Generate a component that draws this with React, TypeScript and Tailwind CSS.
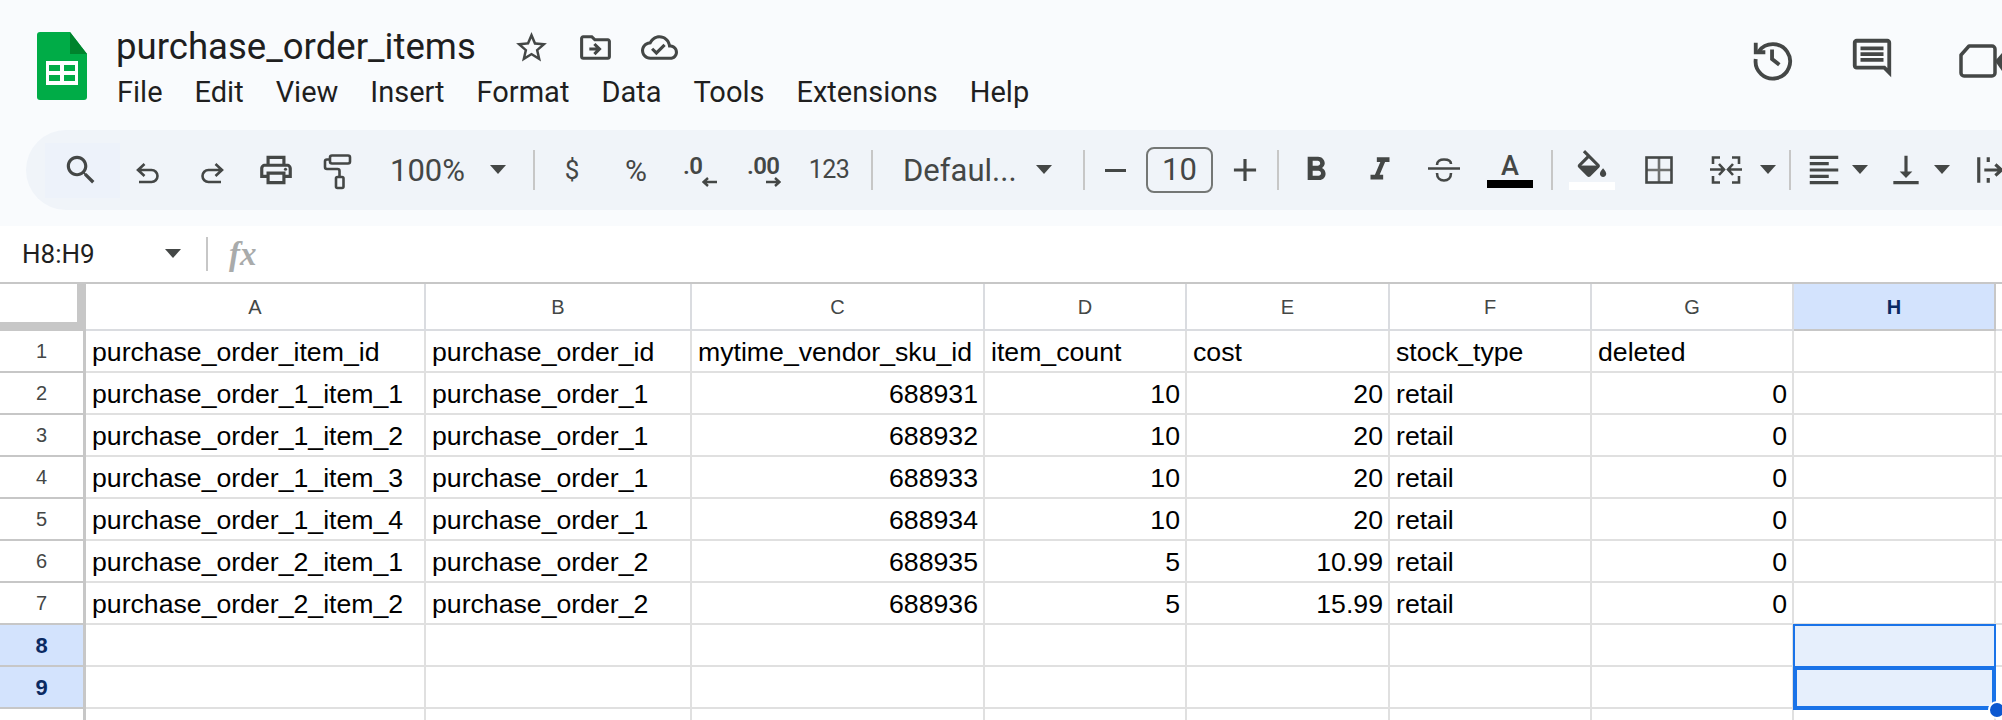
import type { ReactNode } from "react";

const GREY = "#444746";

function Icon({ size = 32, children, className = "" }: { size?: number; children: ReactNode; className?: string }) {
  return (
    <svg width={size} height={size} viewBox="0 0 24 24" fill={GREY} className={className}>
      {children}
    </svg>
  );
}

function Caret({ className = "" }: { className?: string }) {
  return (
    <svg width="18" height="10" viewBox="0 0 18 10" fill={GREY} className={className}>
      <path d="M1 0h16l-8 9z" />
    </svg>
  );
}

function Sep() {
  return <div className="w-[2px] h-10 bg-[#c7c7c7] shrink-0" />;
}

function Btn({ className, children }: { className: string; children: ReactNode }) {
  return <div className={`flex items-center justify-center shrink-0 h-full ${className}`}>{children}</div>;
}

const stroke = { fill: "none", stroke: GREY, strokeWidth: 2 };
const thick = { fill: "none", stroke: GREY, strokeWidth: 2.6 };

const columns = ["A", "B", "C", "D", "E", "F", "G", "H"];

const rows: (string | number)[][] = [
  ["purchase_order_item_id", "purchase_order_id", "mytime_vendor_sku_id", "item_count", "cost", "stock_type", "deleted", ""],
  ["purchase_order_1_item_1", "purchase_order_1", 688931, 10, 20, "retail", 0, ""],
  ["purchase_order_1_item_2", "purchase_order_1", 688932, 10, 20, "retail", 0, ""],
  ["purchase_order_1_item_3", "purchase_order_1", 688933, 10, 20, "retail", 0, ""],
  ["purchase_order_1_item_4", "purchase_order_1", 688934, 10, 20, "retail", 0, ""],
  ["purchase_order_2_item_1", "purchase_order_2", 688935, 5, 10.99, "retail", 0, ""],
  ["purchase_order_2_item_2", "purchase_order_2", 688936, 5, 15.99, "retail", 0, ""],
  ["", "", "", "", "", "", "", ""],
  ["", "", "", "", "", "", "", ""],
  ["", "", "", "", "", "", "", ""],
];

function Logo() {
  return (
    <svg width="50" height="68" viewBox="0 0 50 68" className="shrink-0">
      <path d="M3 0h30l17 22v43a3 3 0 0 1-3 3H3a3 3 0 0 1-3-3V3a3 3 0 0 1 3-3z" fill="#00ac47" />
      <path d="M33 0l17 22H33z" fill="#00832d" />
      <path d="M9 29h32v24H9z" fill="#fff" />
      <path d="M12 33h11v6H12zM27 33h11v6H27zM12 43h11v6H12zM27 43h11v6H27z" fill="#00ac47" />
    </svg>
  );
}

function TitleBar() {
  return (
    <div className="flex h-[130px] pl-[37px] overflow-hidden">
      <div className="mt-8"><Logo /></div>
      <div className="ml-[29px] pt-[24px]">
        <div className="flex items-center h-[46px]">
          <span className="text-[36.6px] leading-none text-[#1f1f1f] font-['Roboto',sans-serif]">purchase_order_items</span>
          <div className="flex items-center ml-[37px] gap-[27px]">
            <Icon size={37}>
              <path d="M22 9.24l-7.19-.62L12 2 9.19 8.63 2 9.24l5.46 4.73L5.82 21 12 17.27 18.18 21l-1.63-7.03L22 9.24zM12 15.4l-3.76 2.27 1-4.28-3.32-2.88 4.38-.38L12 6.1l1.71 4.04 4.38.38-3.32 2.88 1 4.28L12 15.4z" />
            </Icon>
            <Icon size={37}>
              <path d="M20 6h-8l-2-2H4c-1.1 0-2 .9-2 2v12c0 1.1.9 2 2 2h16c1.1 0 2-.9 2-2V8c0-1.1-.9-2-2-2zm0 12H4V6h5.17l2 2H20v10z" />
              <path d="M12.16 12H8v2h4.16l-1.59 1.59L11.99 17 16 13l-4.01-4-1.42 1.41z" />
            </Icon>
            <Icon size={37}>
              <path d="M19.35 10.04C18.67 6.59 15.64 4 12 4 9.11 4 6.6 5.64 5.35 8.04 2.34 8.36 0 10.91 0 14c0 3.31 2.69 6 6 6h13c2.76 0 5-2.24 5-5 0-2.64-2.05-4.78-4.65-4.96zM19 18H6c-2.21 0-4-1.79-4-4 0-2.05 1.53-3.76 3.56-3.97l1.07-.11.5-.95C8.08 7.14 9.94 6 12 6c2.62 0 4.88 1.86 5.39 4.43l.3 1.5 1.53.11c1.56.1 2.78 1.41 2.78 2.96 0 1.65-1.35 3-3 3zm-9-3.82l-2.09-2.09L6.5 13.5 10 17l6.01-6.01-1.41-1.41z" />
            </Icon>
          </div>
        </div>
        <div className="flex gap-[32px] ml-[1px] mt-[2px] text-[29px] leading-[40px] text-[#1f1f1f] font-['Roboto',sans-serif]">
          {["File", "Edit", "View", "Insert", "Format", "Data", "Tools", "Extensions", "Help"].map((m) => (
            <span key={m}>{m}</span>
          ))}
        </div>
      </div>
      <div className="ml-auto flex items-start pt-[35px] shrink-0">
        <Icon size={46}>
          <path d="M4.6 8.5A9 9 0 1 1 3 12.5" {...stroke} />
          <path d="M3 4v5h5" {...stroke} />
          <path d="M11.5 7.5v5l3.8 3" {...stroke} />
        </Icon>
        <Icon size={46} className="ml-[53px]">
          <path d="M20 17.17 18.83 16H4V4h16v13.17zM20 2H4c-1.1 0-2 .9-2 2v12c0 1.1.9 2 2 2h14l4 4V4c0-1.1-.9-2-2-2z" />
          <path d="M6 12h12v2H6zm0-3h12v2H6zm0-3h12v2H6z" />
        </Icon>
        <svg width="43" height="34" viewBox="0 0 43 34" className="ml-[64px] mt-[9px]">
          <path d="M10 2h23a3 3 0 0 1 3 3v24a3 3 0 0 1-3 3H5a3 3 0 0 1-3-3V11z" fill="none" stroke={GREY} strokeWidth="3.5" strokeLinejoin="round" />
          <path d="M36 17l7-8v18z" fill={GREY} />
        </svg>
      </div>
    </div>
  );
}

function Toolbar() {
  return (
    <div className="ml-[26px] h-20 bg-[#f0f4f9] rounded-l-[40px] flex items-center pl-[19px] text-[#444746] font-['Roboto',sans-serif] overflow-hidden">
      <div className="w-[75px] h-[55px] bg-[#edf2fa] flex items-center justify-center pr-1 shrink-0">
        <Icon size={38}>
          <path d="M15.5 14h-.79l-.28-.27C15.41 12.59 16 11.11 16 9.5 16 5.91 13.09 3 9.5 3S3 5.91 3 9.5 5.91 16 9.5 16c1.61 0 3.09-.59 4.23-1.57l.27.28v.79l5 4.99L20.49 19l-4.99-5zm-6 0C7.01 14 5 11.99 5 9.5S7.01 5 9.5 5 14 7.01 14 9.5 11.99 14 9.5 14z" />
        </Icon>
      </div>
      <Btn className="w-[56px]">
        <svg width="24" height="21" viewBox="0 0 24 21" className="mt-[6px]">
          <path d="M8.5 1L2 7l6.5 6M2 7h13.5a6 6 0 0 1 0 12H3" {...thick} />
        </svg>
      </Btn>
      <Btn className="w-[72px]">
        <svg width="24" height="21" viewBox="0 0 24 21" className="mt-[6px]">
          <path d="M15.5 1L22 7l-6.5 6M22 7H8.5a6 6 0 0 0 0 12H21" {...thick} />
        </svg>
      </Btn>
      <Btn className="w-[56px]">
        <Icon size={38}>
          <path d="M19 8h-1V3H6v5H5c-1.66 0-3 1.34-3 3v6h4v4h12v-4h4v-6c0-1.66-1.34-3-3-3zM8 5h8v3H8V5zm8 12v2H8v-4h8v2zm2-2v-2H6v2H4v-4c0-.55.45-1 1-1h14c.55 0 1 .45 1 1v4h-2z" />
          <circle cx="18" cy="11.5" r="1" />
        </Icon>
      </Btn>
      <Btn className="w-[68px]">
        <svg width="30" height="36" viewBox="0 0 30 36" className="mt-[3px]">
          <rect x="7" y="1.5" width="20" height="8" rx="2" {...thick} />
          <path d="M7 5.5H4a2 2 0 0 0-2 2V13a2 2 0 0 0 2 2h10.5a2 2 0 0 1 2 2v6" {...thick} />
          <rect x="13" y="23" width="7.5" height="11" rx="1.5" {...thick} />
        </svg>
      </Btn>
      <div className="flex items-center h-full w-[161px] pl-[18px] shrink-0">
        <span className="text-[31px] w-[99px] leading-none">100%</span>
        <Caret />
      </div>
      <Sep />
      <Btn className="w-[74px] text-[26px]">$</Btn>
      <Btn className="w-[54px] text-[30px]">%</Btn>
      <Btn className="w-[70px]">
        <div className="relative w-[34px] h-[32px] ml-1 mt-[2px]">
          <span className="absolute left-0 top-0 text-[24px] font-semibold leading-[22px] tracking-tight">.0</span>
          <svg width="15" height="10" viewBox="0 0 15 10" className="absolute right-0 bottom-0">
            <path d="M15 5H2M6 1L1.5 5 6 9" fill="none" stroke={GREY} strokeWidth="2.4" />
          </svg>
        </div>
      </Btn>
      <Btn className="w-[62px]">
        <div className="relative w-[34px] h-[32px] mt-[2px]">
          <span className="absolute left-0 top-0 text-[24px] font-semibold leading-[22px] tracking-tight">.00</span>
          <svg width="15" height="10" viewBox="0 0 15 10" className="absolute right-0 bottom-0">
            <path d="M0 5h13M9 1l4.5 4L9 9" fill="none" stroke={GREY} strokeWidth="2.4" />
          </svg>
        </div>
      </Btn>
      <Btn className="w-[68px] mr-[8px] text-[25px] tracking-tight">123</Btn>
      <Sep />
      <div className="flex items-center h-full w-[210px] pl-[30px] shrink-0">
        <span className="text-[31px] w-[132px] leading-none whitespace-nowrap">Defaul...</span>
        <Caret />
      </div>
      <Sep />
      <Btn className="w-[61px]">
        <div className="w-[21px] h-[3px] bg-[#444746]" />
      </Btn>
      <div className="w-[67px] h-[46px] shrink-0 border-2 border-[#747775] rounded-[8px] flex items-center justify-center text-[31px]">10</div>
      <Btn className="w-[64px]">
        <Icon size={38}><path d="M19 13h-6v6h-2v-6H5v-2h6V5h2v6h6v2z" /></Icon>
      </Btn>
      <Sep />
      <Btn className="w-[74px]">
        <Icon size={40}>
          <path d="M15.6 10.79c.97-.67 1.65-1.77 1.65-2.79 0-2.26-1.75-4-4-4H7v14h7.04c2.09 0 3.71-1.7 3.71-3.79 0-1.52-.86-2.82-2.15-3.42zM10 6.5h3c.83 0 1.5.67 1.5 1.5s-.67 1.5-1.5 1.5h-3v-3zm3.5 9H10v-3h3.5c.83 0 1.5.67 1.5 1.5s-.67 1.5-1.5 1.5z" />
        </Icon>
      </Btn>
      <Btn className="w-[54px]">
        <Icon size={38}><path d="M10 4v3h2.21l-3.42 8H6v3h8v-3h-2.21l3.42-8H18V4z" /></Icon>
      </Btn>
      <Btn className="w-[74px]">
        <svg width="32" height="24" viewBox="0 0 32 24">
          <path d="M0 10.5h32" {...thick} />
          <path d="M9 7C9 3 12 1.5 16 1.5S23 3 23 6M9 15c0 5 3 7.5 7 7.5s7-2.5 7-7.5" {...thick} />
        </svg>
      </Btn>
      <div className="w-[58px] h-full flex flex-col items-center justify-center shrink-0">
        <span className="text-[27px] leading-[26px] font-medium">A</span>
        <div className="w-[46px] h-2 bg-black mt-[1px]" />
      </div>
      <div className="ml-[12px]"><Sep /></div>
      <div className="w-[78px] h-full flex flex-col items-center justify-center shrink-0">
        <Icon size={38} className="-mb-[6px]">
          <path d="M16.56 8.94L7.62 0 6.21 1.41l2.38 2.38-5.15 5.15c-.59.59-.59 1.54 0 2.12l5.5 5.5c.29.29.68.44 1.06.44s.77-.15 1.06-.44l5.5-5.5c.59-.58.59-1.53 0-2.12zM5.21 10L10 5.21 14.79 10H5.21zM19 11.5s-2 2.17-2 3.5c0 1.1.9 2 2 2s2-.9 2-2c0-1.33-2-3.5-2-3.5z" />
          <path d="M5 10h10l-5 5z" />
        </Icon>
        <div className="w-[46px] h-2 bg-white" />
      </div>
      <Btn className="w-[62px] pr-[6px]">
        <svg width="28" height="28" viewBox="0 0 28 28">
          <path d="M14 2v24M2 14h24" fill="none" stroke="#6f7170" strokeWidth="2.6" />
          <rect x="1.5" y="1.5" width="25" height="25" {...thick} />
        </svg>
      </Btn>
      <Btn className="w-[66px]">
        <svg width="32" height="28" viewBox="0 0 32 28">
          <path d="M10 1.5H3V8M3 20v6.5h7M22 1.5h7V8M29 20v6.5h-7" {...thick} />
          <path d="M0 13.5h13M9 8l5 5.5L9 19M32 13.5H19M23 8l-5 5.5 5 5.5" {...thick} />
        </svg>
      </Btn>
      <Btn className="w-[30px] justify-start"><Caret /></Btn>
      <Sep />
      <Btn className="w-[60px] pl-[6px]">
        <Icon size={38}>
          <path d="M3 3h18v2H3zM3 7h12v2H3zM3 11h18v2H3zM3 15h12v2H3zM3 19h18v2H3z" />
        </Icon>
      </Btn>
      <Btn className="w-[24px] justify-start"><Caret /></Btn>
      <Btn className="w-[58px] pl-[4px]">
        <Icon size={38}>
          <path d="M16 13h-3V3h-2v10H8l4 4 4-4zM4 19v2h16v-2H4z" />
        </Icon>
      </Btn>
      <Btn className="w-[30px] justify-start"><Caret /></Btn>
      <Btn className="w-[50px] justify-start pl-[11px]">
        <Icon size={38}>
          <path d="M3 4v16M9 4v3M9 17v3M6.5 12H17M13.5 8.5l4 3.5-4 3.5" {...stroke} />
        </Icon>
      </Btn>
    </div>
  );
}

function FormulaBar() {
  return (
    <div className="h-14 flex items-center pl-[22px] bg-white">
      <span className="w-[142px] text-[26px] text-[#1f1f1f] font-['Roboto',sans-serif]">H8:H9</span>
      <Caret />
      <div className="w-[2px] h-[34px] bg-[#c7c7c7] ml-[24px]" />
      <span className="ml-[21px] text-[33px] leading-none font-bold italic text-[#a9abab] font-['Liberation_Serif',serif]">fx</span>
    </div>
  );
}

function Sheet() {
  return (
    <div className="relative grid grid-cols-[86px_340px_266px_293px_202px_203px_202px_202px_202px_auto] grid-rows-[47px] auto-rows-[42px] border-t-2 border-[#c7c7c7] font-['Liberation_Sans',sans-serif] text-[#000] bg-white">
      {/* corner */}
      <div className="bg-white border-r-[9px] border-b-[9px] border-[#c7c7c7]" />
      {columns.map((c) => (
        <div
          key={c}
          className={`flex items-center justify-center border-r-2 border-b-2 text-[20px] ${
            c === "H" ? "bg-[#d3e3fd] text-[#0b2a62] font-bold border-[#c7c7c7]" : "text-[#444746] border-[#dadce0]"
          }`}
        >
          {c}
        </div>
      ))}
      <div className="border-b-2 border-[#dadce0]" />
      {rows.map((row, i) => {
        const selected = i === 7 || i === 8;
        return (
          <div key={i} className="contents">
            <div
              className={`flex items-center justify-center border-r-[3px] border-b-2 border-[#c7c7c7] ${
                selected ? "bg-[#d3e3fd] text-[#0b2a62] font-bold text-[22px]" : "text-[#444746] text-[20px]"
              }`}
            >
              {i < 9 ? i + 1 : ""}
            </div>
            {row.map((cell, j) => (
              <div
                key={j}
                className={`flex items-center pl-[6px] pr-[5px] pt-[2px] border-r-2 border-b-2 border-[#e0e0e0] text-[26.67px] whitespace-nowrap overflow-hidden ${
                  typeof cell === "number" ? "justify-end" : "justify-start"
                }`}
              >
                {cell}
              </div>
            ))}
            <div className="border-b-2 border-[#e0e0e0]" />
          </div>
        );
      })}
      {/* selected range H8:H9 */}
      <div className="absolute left-[1793px] top-[340px] w-[203px] h-[86px] bg-[#e6effc] border-2 border-[#1a73e8]">
        <div className="absolute -left-[2px] top-[40px] w-[203px] h-[44px] border-[4px] border-[#1a73e8]" />
      </div>
      <div className="absolute left-[1988px] top-[417px] w-[18px] h-[18px] rounded-full bg-[#0b57d0] border-2 border-white" />
    </div>
  );
}

export default function App() {
  return (
    <div className="w-[2002px] h-[720px] overflow-hidden bg-white">
      <div className="h-[226px] bg-[#f9fbfd]">
        <TitleBar />
        <Toolbar />
      </div>
      <FormulaBar />
      <Sheet />
    </div>
  );
}
